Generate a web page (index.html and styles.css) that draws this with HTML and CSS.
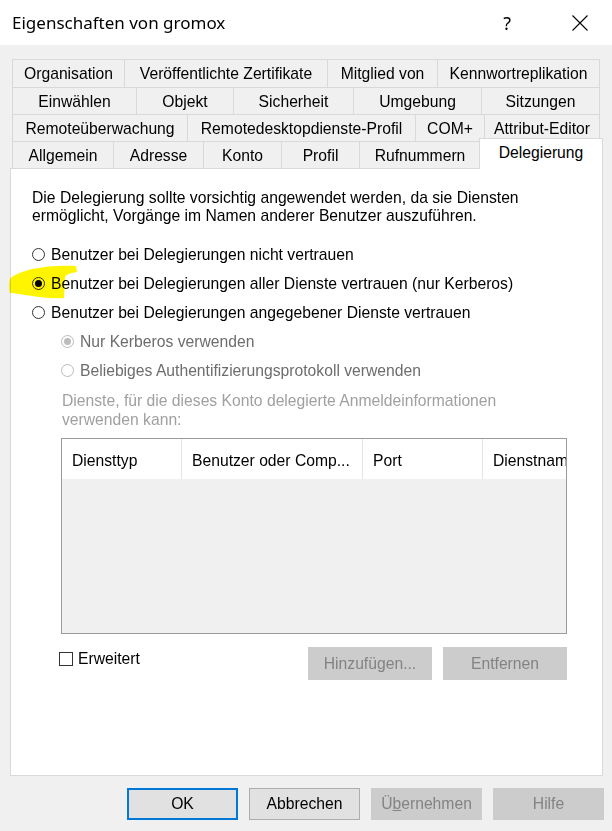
FILE: index.html
```html
<!DOCTYPE html>
<html lang="de">
<head>
    <meta charset="UTF-8">
    <meta name="viewport" content="width=device-width, initial-scale=1.0">
    <title>Eigenschaften von gromox</title>
    <link rel="stylesheet" href="styles.css">
</head>
<body>
    <div class="window">
        <header class="titlebar">
            <span class="title">Eigenschaften von gromox</span>
            <span class="help">?</span>
            <svg class="close" width="16" height="16" viewBox="0 0 16 16">
                <path d="M0.5 0.5L15.5 15.5M15.5 0.5L0.5 15.5" stroke="#000" stroke-width="1.1" fill="none"/>
            </svg>
        </header>

        <nav class="tabs">
            <div class="tab-row row1">
                <div class="tab">Organisation</div>
                <div class="tab">Veröffentlichte Zertifikate</div>
                <div class="tab">Mitglied von</div>
                <div class="tab">Kennwortreplikation</div>
            </div>
            <div class="tab-row row2">
                <div class="tab">Einwählen</div>
                <div class="tab">Objekt</div>
                <div class="tab">Sicherheit</div>
                <div class="tab">Umgebung</div>
                <div class="tab">Sitzungen</div>
            </div>
            <div class="tab-row row3">
                <div class="tab">Remoteüberwachung</div>
                <div class="tab">Remotedesktopdienste-Profil</div>
                <div class="tab">COM+</div>
                <div class="tab">Attribut-Editor</div>
            </div>
            <div class="tab-row row4">
                <div class="tab">Allgemein</div>
                <div class="tab">Adresse</div>
                <div class="tab">Konto</div>
                <div class="tab">Profil</div>
                <div class="tab">Rufnummern</div>
                <div class="tab active">Delegierung</div>
            </div>
        </nav>

        <section class="panel">
            <p class="intro">Die Delegierung sollte vorsichtig angewendet werden, da sie Diensten<br>ermöglicht, Vorgänge im Namen anderer Benutzer auszuführen.</p>

            <div class="option"><span class="radio"></span>Benutzer bei Delegierungen nicht vertrauen</div>
            <div class="option"><span class="radio checked"></span>Benutzer bei Delegierungen aller Dienste vertrauen (nur Kerberos)</div>
            <div class="option"><span class="radio"></span>Benutzer bei Delegierungen angegebener Dienste vertrauen</div>
            <div class="option sub disabled"><span class="radio checked"></span>Nur Kerberos verwenden</div>
            <div class="option sub disabled"><span class="radio"></span>Beliebiges Authentifizierungsprotokoll verwenden</div>

            <p class="list-label">Dienste, für die dieses Konto delegierte Anmeldeinformationen<br>verwenden kann:</p>

            <div class="listview">
                <div class="list-header">
                    <div class="col c1">Diensttyp</div>
                    <div class="col c2">Benutzer oder Comp...</div>
                    <div class="col c3">Port</div>
                    <div class="col c4">Dienstnam</div>
                </div>
            </div>

            <div class="list-actions">
                <div class="check"><span class="box"></span>Erweitert</div>
                <div class="action-buttons">
                    <button class="btn small" disabled>Hinzufügen...</button>
                    <button class="btn small" disabled>Entfernen</button>
                </div>
            </div>
        </section>

        <footer class="buttons">
            <button class="btn default">OK</button>
            <button class="btn">Abbrechen</button>
            <button class="btn" disabled>Ü<u>b</u>ernehmen</button>
            <button class="btn" disabled>Hilfe</button>
        </footer>

        <!-- marker highlight over the selected option -->
        <svg class="marker" width="72" height="38" viewBox="0 0 72 38">
            <path d="M2 16 C4 13 12 9 24 6 C38 3 54 2 68 3 L69 9 C63 10 59 11 57 14 L56 35 C44 36 30 34 18 32 C10 31 5 30 2 30 C1 25 1 20 2 16 Z" fill="#fff500"/>
        </svg>
    </div>
</body>
</html>
```

FILE: styles.css
```css
* {
    margin: 0;
    padding: 0;
    box-sizing: border-box;
}
body {
    background-color: #f0f0f0;
    font-family: "Liberation Sans", Arial, sans-serif;
    font-size: 15.7px;
    color: #000;
}
.window {
    position: relative;
    width: 612px;
    height: 831px;
    overflow: hidden;
}

/* title bar */
.titlebar {
    height: 45px;
    background-color: #fff;
    display: flex;
    align-items: center;
    padding-left: 12px;
}
.title {
    font-family: "Noto Sans", sans-serif;
    font-size: 17px;
    flex: 1;
    padding-bottom: 1px;
}
.help {
    font-family: "Noto Sans", sans-serif;
    font-size: 18px;
    margin-right: 61px;
}
.close {
    margin-right: 24px;
}

/* tabs */
.tabs {
    margin: 14px 12px 0 12px;
}
.tab-row {
    display: grid;
    height: 27px;
}
.row1 { grid-template-columns: 113px 203px 110px 162px; height: 28px; }
.row2 { grid-template-columns: 125px 97px 120px 128px 118px; }
.row3 { grid-template-columns: 176px 228px 69px 115px; }
.row4 { grid-template-columns: 102px 90px 78px 78px 121px 119px; }
.tab {
    display: flex;
    align-items: center;
    justify-content: center;
    border-top: 1px solid #d9d9d9;
    border-right: 1px solid #d9d9d9;
    background-color: #f0f0f0;
    white-space: nowrap;
    padding-top: 1px;
}
.tab:first-child {
    border-left: 1px solid #d9d9d9;
}
.tab.active {
    position: relative;
    z-index: 2;
    background-color: #fff;
    border-left: 1px solid #d9d9d9;
    margin: -3px -3px -1px -2px;
    padding-top: 0;
    padding-bottom: 2px;
}

/* panel */
.panel {
    margin: 0 9px 0 10px;
    height: 608px;
    background-color: #fff;
    border: 1px solid #d9d9d9;
    padding: 20px 20px 0 21px;
}
.intro {
    line-height: 18px;
    margin-bottom: 15px;
    white-space: nowrap;
}
.option {
    height: 29px;
    display: flex;
    align-items: center;
    white-space: nowrap;
}
.option.sub {
    padding-left: 29px;
}
.option.disabled {
    color: #6d6d6d;
}
.radio {
    width: 13px;
    height: 13px;
    border: 1px solid #333;
    border-radius: 50%;
    background-color: #fff;
    margin-right: 6px;
    display: flex;
    align-items: center;
    justify-content: center;
    flex-shrink: 0;
}
.radio.checked::after {
    content: "";
    width: 7px;
    height: 7px;
    border-radius: 50%;
    background-color: #000;
}
.option.disabled .radio {
    border-color: #bcbcbc;
}
.option.disabled .radio.checked::after {
    background-color: #bcbcbc;
}
.list-label {
    margin: 6px 0 0 30px;
    line-height: 19px;
    color: #a0a0a0;
    white-space: nowrap;
}
.listview {
    margin: 9px 0 0 29px;
    width: 506px;
    height: 196px;
    border: 1px solid #9b9b9b;
    background-color: #f0f0f0;
    overflow: hidden;
}
.list-header {
    display: flex;
    height: 40px;
    background-color: #fff;
    white-space: nowrap;
}
.col {
    display: flex;
    align-items: center;
    padding: 3px 0 0 10px;
    border-right: 1px solid #e5e5e5;
    flex-shrink: 0;
    overflow: hidden;
}
.c1 { width: 120px; }
.c2 { width: 181px; }
.c3 { width: 120px; }
.c4 { width: 90px; border-right: none; }

.list-actions {
    margin: 13px 0 0 27px;
    width: 508px;
    display: flex;
    justify-content: space-between;
    align-items: flex-start;
}
.check {
    display: flex;
    align-items: center;
    padding-top: 3px;
}
.box {
    width: 14px;
    height: 14px;
    border: 1px solid #333;
    background-color: #fff;
    margin-right: 5px;
}
.action-buttons {
    display: flex;
    gap: 11px;
}

/* buttons */
.btn {
    width: 111px;
    height: 32px;
    font-family: "Liberation Sans", Arial, sans-serif;
    font-size: 15.7px;
    color: #000;
    background-color: #e1e1e1;
    border: 1px solid #adadad;
}
.btn.small {
    width: 124px;
    height: 33px;
}
.btn:disabled {
    background-color: #cccccc;
    border-color: #cccccc;
    color: #838383;
}
.btn.default {
    border: 2px solid #0078d7;
}
.buttons {
    display: flex;
    justify-content: flex-end;
    gap: 11px;
    margin-top: 12px;
    padding-right: 8px;
}

.marker {
    position: absolute;
    left: 8px;
    top: 263px;
    mix-blend-mode: multiply;
}
```
